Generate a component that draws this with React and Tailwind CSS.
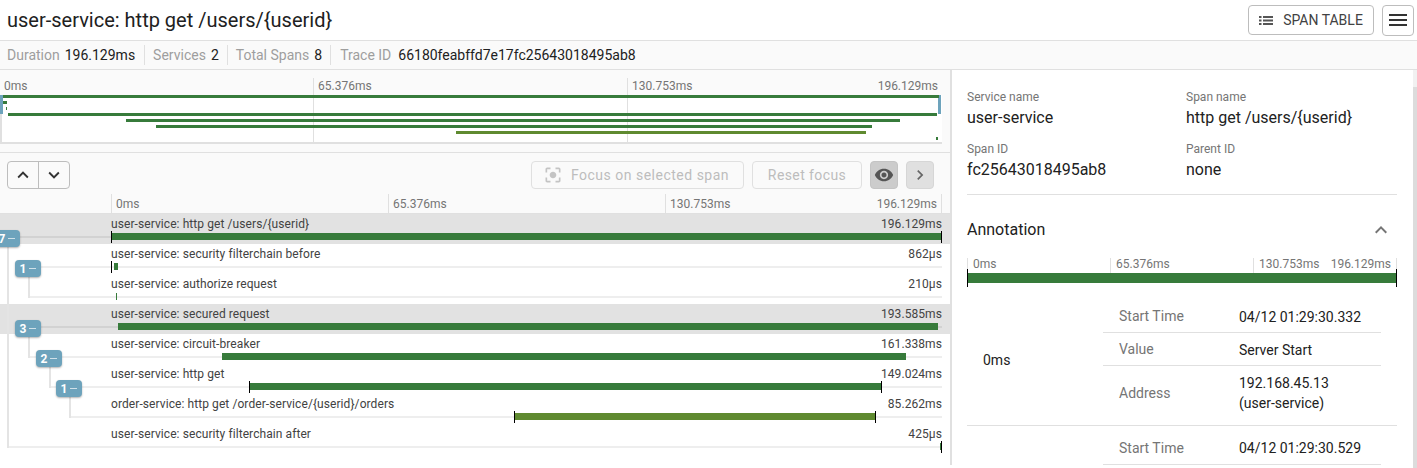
import React from 'react'
import {
  MdCenterFocusStrong,
  MdExpandLess,
  MdKeyboardArrowDown,
  MdKeyboardArrowRight,
  MdKeyboardArrowUp,
  MdMenu,
  MdVisibility,
} from 'react-icons/md'

const GREEN = '#377b3b'
const OLIVE = '#5f8a30'

// x values are page pixels, the chart runs from 111 to 942
const spans = [
  { name: 'user-service: http get /users/{userid}', time: '196.129ms', from: 111, to: 942, ticks: [111, 941], line: 20, badge: { n: 7, x: -6 }, selected: true },
  { name: 'user-service: security filterchain before', time: '862μs', from: 114, to: 118, ticks: [111], line: 41, badge: { n: 1, x: 15 } },
  { name: 'user-service: authorize request', time: '210μs', from: 116, to: 117, ticks: [], line: 28 },
  { name: 'user-service: secured request', time: '193.585ms', from: 118, to: 938, ticks: [], line: 41, badge: { n: 3, x: 15 }, selected: true },
  { name: 'user-service: circuit-breaker', time: '161.338ms', from: 222, to: 906, ticks: [], line: 28, badge: { n: 2, x: 36 } },
  { name: 'user-service: http get', time: '149.024ms', from: 249, to: 882, ticks: [249, 881], line: 49, badge: { n: 1, x: 56 } },
  { name: 'order-service: http get /order-service/{userid}/orders', time: '85.262ms', from: 514, to: 876, ticks: [514, 875], line: 69, color: OLIVE },
  { name: 'user-service: security filterchain after', time: '425μs', from: 940, to: 942, ticks: [941], line: 7 },
]

const miniBars = [
  { from: 3, to: 939 },
  { from: 3, to: 7 },
  { from: 6, to: 7 },
  { from: 8, to: 937 },
  { from: 126, to: 900 },
  { from: 156, to: 872 },
  { from: 456, to: 866, color: OLIVE },
  { from: 936, to: 938 },
]

// elbow lines of the span tree, tops are relative to the first row (y 214)
const treeLines = [
  { x: 7, top: 33, h: 201 },
  { x: 28, top: 63, h: 21 },
  { x: 28, top: 123, h: 21 },
  { x: 49, top: 153, h: 21 },
  { x: 69, top: 183, h: 21 },
]

function ListIcon() {
  return (
    <svg width="14" height="9" viewBox="0 0 14 9" fill="#555555">
      <rect x="0" y="0" width="2.5" height="2" />
      <rect x="4" y="0" width="10" height="2" />
      <rect x="0" y="3.5" width="2.5" height="2" />
      <rect x="4" y="3.5" width="10" height="2" />
      <rect x="0" y="7" width="2.5" height="2" />
      <rect x="4" y="7" width="10" height="2" />
    </svg>
  )
}

function Badge({ n, x }) {
  return (
    <div
      className="absolute top-[16px] z-10 flex h-[17px] w-[26px] items-center justify-center gap-[3px] rounded-[4px] bg-[#6da3bc] text-[12px] font-bold text-white shadow-[0_1px_2px_rgba(0,0,0,0.3)]"
      style={{ left: x }}
    >
      <span>{n}</span>
      <span className="h-[1.5px] w-[7px] bg-[#cfe0e8]" />
    </div>
  )
}

function SpanRow({ span }) {
  return (
    <div className={`relative h-[30px] text-[12px] leading-[18px] tracking-[0.08px] text-[#424242] ${span.selected ? 'bg-[#e2e2e2]' : ''}`}>
      <div className="flex justify-between pl-[111px] pr-[8px] pt-[1px]">
        <span>{span.name}</span>
        <span>{span.time}</span>
      </div>
      <div
        className={`absolute top-[22px] h-[2px] ${span.selected ? 'bg-[#d2d2d2]' : 'bg-[#eeeeee]'}`}
        style={{ left: span.line, width: 942 - span.line }}
      />
      <div
        className="absolute top-[19px] h-[7px]"
        style={{ left: span.from, width: span.to - span.from, backgroundColor: span.color || GREEN }}
      />
      {span.ticks.map((x) => (
        <div key={x} className="absolute top-[17px] h-[12px] w-px bg-black" style={{ left: x }} />
      ))}
      {span.badge && <Badge n={span.badge.n} x={span.badge.x} />}
    </div>
  )
}

function MiniMap() {
  return (
    <div className="relative h-[49px] w-[942px] border-b-2 border-l-2 border-[#e0e0e0] bg-white">
      <div className="absolute -left-[2px] top-0 h-[19px] w-[3px] bg-[#6da3bc]" />
      <div className="absolute left-[936px] top-0 h-[19px] w-[3px] bg-[#6da3bc]" />
      <div className="absolute left-[311px] top-0 h-full w-px bg-[#e0e0e0]" />
      <div className="absolute left-[625px] top-0 h-full w-px bg-[#e0e0e0]" />
      {miniBars.map((bar, i) => (
        <div
          key={i}
          className="absolute h-[3px]"
          style={{ left: bar.from - 2, width: bar.to - bar.from, top: i * 6, backgroundColor: bar.color || GREEN }}
        />
      ))}
    </div>
  )
}

function Field({ label, value }) {
  return (
    <div>
      <div className="text-[12px] leading-[18px] text-[#757575]">{label}</div>
      <div className="mt-[1px] text-[16px] leading-[22px] text-[#212121]">{value}</div>
    </div>
  )
}

function AnnotationRow({ label, children, last }) {
  return (
    <div className={`flex items-center border-[#e0e0e0] pl-[16px] ${last ? '' : 'border-b'}`}>
      <div className="w-[120px] text-[14px] text-[#757575]">{label}</div>
      <div className="text-[14px] leading-[20px] text-[#212121]">{children}</div>
    </div>
  )
}

export default function App() {
  return (
    <div className="relative h-[468px] w-[1417px] overflow-hidden bg-white font-['Roboto',sans-serif]">
      <header className="flex h-[41px] items-center justify-between border-b border-[#e0e0e0] pl-[7px] pr-[3px]">
        <h1 className="text-[20px] leading-[32px] text-[#212121]">user-service: http get /users/{'{userid}'}</h1>
        <div className="flex items-center gap-[8px]">
          <button className="flex h-[30px] w-[126px] items-center justify-center gap-[10px] rounded-[4px] border border-[#bdbdbd] text-[14px] text-[#424242]">
            <ListIcon />
            SPAN TABLE
          </button>
          <button className="flex h-[31px] w-[32px] items-center justify-center rounded-[4px] border border-[#bdbdbd] text-[#333333]">
            <MdMenu className="text-[24px]" />
          </button>
        </div>
      </header>

      <div className="flex h-[29px] items-center border-b border-[#e0e0e0] bg-[#fafafa] pl-[7px] text-[14px] text-[#212121]">
        <div className="flex h-[20px] items-center border-r border-[#e0e0e0] pr-[9px]">
          <span className="mr-[5px] text-[#9e9e9e]">Duration</span>196.129ms
        </div>
        <div className="flex h-[20px] items-center border-r border-[#e0e0e0] px-[8px]">
          <span className="mr-[5px] text-[#9e9e9e]">Services</span>2
        </div>
        <div className="flex h-[20px] items-center border-r border-[#e0e0e0] px-[8px]">
          <span className="mr-[5px] text-[#9e9e9e]">Total Spans</span>8
        </div>
        <div className="flex h-[20px] items-center pl-[9px]">
          <span className="mr-[7px] text-[#9e9e9e]">Trace ID</span>66180feabffd7e17fc25643018495ab8
        </div>
      </div>

      <div className="flex">
        <main className="w-[952px] shrink-0 border-r-2 border-[#e0e0e0]">
          <div className="h-[83px] border-b border-[#e0e0e0] bg-[#fafafa] pt-[8px]">
            <div className="flex h-[17px] w-[942px] text-[12px] text-[#757575]">
              <div className="flex h-full w-[313px] items-center pb-[2px] pl-[4px]">0ms</div>
              <div className="flex h-full w-[314px] items-center border-l border-[#e0e0e0] pb-[2px] pl-[4px]">65.376ms</div>
              <div className="flex h-full flex-1 items-center justify-between border-l border-[#e0e0e0] px-[4px] pb-[2px]">
                <span>130.753ms</span>
                <span>196.129ms</span>
              </div>
            </div>
            <MiniMap />
          </div>

          <div className="flex h-[41px] items-center justify-between bg-[#fafafa] pl-[7px] pr-[16px] pt-[3px]">
            <div className="flex h-[28px] w-[63px] rounded-[4px] border border-[#bdbdbd] text-[#333333]">
              <button className="flex flex-1 items-center justify-center border-r border-[#bdbdbd]">
                <MdKeyboardArrowUp className="text-[22px]" />
              </button>
              <button className="flex flex-1 items-center justify-center">
                <MdKeyboardArrowDown className="text-[22px]" />
              </button>
            </div>
            <div className="flex items-center gap-[8px]">
              <button className="flex h-[28px] w-[213px] items-center justify-center gap-[8px] rounded-[4px] border border-[#e0e0e0] pr-[3px] text-[14px] tracking-[0.5px] text-[#bdbdbd]">
                <MdCenterFocusStrong className="text-[20px] text-[#c4c4c4]" />
                Focus on selected span
              </button>
              <button className="flex h-[28px] w-[110px] items-center justify-center rounded-[4px] border border-[#e0e0e0] text-[14px] tracking-[0.4px] text-[#bdbdbd]">
                Reset focus
              </button>
              <button className="flex h-[28px] w-[28px] items-center justify-center rounded-[4px] border border-[#c4c4c4] bg-[#cccccc] text-[#555555]">
                <MdVisibility className="text-[20px]" />
              </button>
              <button className="flex h-[28px] w-[28px] items-center justify-center rounded-[4px] border border-[#d6d6d6] bg-[#e0e0e0] text-[#666666]">
                <MdKeyboardArrowRight className="text-[20px]" />
              </button>
            </div>
          </div>

          <div className="flex h-[20px] border-b border-[#e0e0e0] bg-[#fafafa] pl-[111px] text-[12px] text-[#757575]">
            <div className="flex h-full w-[277px] items-center border-l border-[#e0e0e0] pl-[4px]">0ms</div>
            <div className="flex h-full w-[277px] items-center border-l border-[#e0e0e0] pl-[4px]">65.376ms</div>
            <div className="flex h-full w-[277px] items-center justify-between border-x border-[#e0e0e0] px-[4px]">
              <span>130.753ms</span>
              <span>196.129ms</span>
            </div>
          </div>

          <div className="relative">
            {spans.map((span) => (
              <SpanRow key={span.name} span={span} />
            ))}
            {treeLines.map((l, i) => (
              <div key={i} className="absolute w-[2px] bg-[#e4e4e4]" style={{ left: l.x, top: l.top, height: l.h }} />
            ))}
          </div>
        </main>

        <aside className="flex-1 pl-[15px] pr-[20px] pt-[18px]">
          <div className="grid grid-cols-[219px_1fr] gap-y-[11px] border-b border-[#e0e0e0] pb-[13px]">
            <Field label="Service name" value="user-service" />
            <Field label="Span name" value="http get /users/{userid}" />
            <Field label="Span ID" value="fc25643018495ab8" />
            <Field label="Parent ID" value="none" />
          </div>

          <div className="flex h-[63px] items-center justify-between pr-[4px] pt-[6px] text-[16px] text-[#212121]">
            Annotation
            <MdExpandLess className="text-[24px] text-[#757575]" />
          </div>

          <div className="flex h-[15px] text-[12px] leading-[13px] text-[#757575]">
            <div className="w-[143px] border-l border-[#e0e0e0] pl-[5px]">0ms</div>
            <div className="w-[143px] border-l border-[#e0e0e0] pl-[5px]">65.376ms</div>
            <div className="flex flex-1 justify-between border-x border-[#e0e0e0] px-[5px]">
              <span>130.753ms</span>
              <span>196.129ms</span>
            </div>
          </div>
          <div className="relative h-[10px] bg-[#377b3b]">
            <div className="absolute -top-[4px] left-0 h-[18px] w-px bg-black" />
            <div className="absolute -top-[4px] right-0 h-[18px] w-px bg-black" />
          </div>

          <div className="mt-[17px] flex border-b border-[#e0e0e0]">
            <div className="flex w-[136px] items-center pb-[5px] pl-[16px] text-[14px] text-[#212121]">0ms</div>
            <div className="w-[278px]">
              <div className="[&>div]:h-[33px] [&>div]:pt-[1px]">
                <AnnotationRow label="Start Time">04/12 01:29:30.332</AnnotationRow>
                <AnnotationRow label="Value">Server Start</AnnotationRow>
              </div>
              <div className="h-[59px] [&>div]:h-full [&>div]:pb-[5px]">
                <AnnotationRow label="Address" last>
                  192.168.45.13
                  <br />
                  (user-service)
                </AnnotationRow>
              </div>
            </div>
          </div>

          <div className="flex">
            <div className="w-[136px]" />
            <div className="w-[278px] [&>div]:h-[39px] [&>div]:pt-[6px]">
              <AnnotationRow label="Start Time">04/12 01:29:30.529</AnnotationRow>
            </div>
          </div>
        </aside>
      </div>

      {/* panel scrollbar */}
      <div className="absolute right-0 top-[70px] h-[398px] w-[4px] bg-[#f1f1f1]">
        <div className="mt-[17px] h-[381px] bg-[#dcdcdc]" />
      </div>
    </div>
  )
}
